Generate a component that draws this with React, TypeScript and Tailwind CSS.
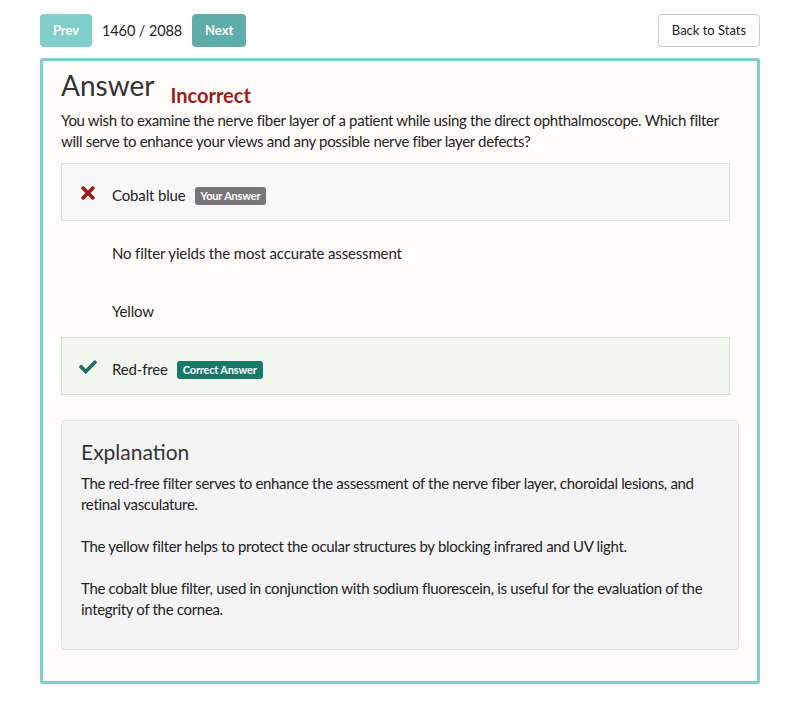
import { FaTimes, FaCheck } from 'react-icons/fa';

type Option = {
  text: string;
  state: 'wrong' | 'right' | 'none';
};

const options: Option[] = [
  { text: 'Cobalt blue', state: 'wrong' },
  { text: 'No filter yields the most accurate assessment', state: 'none' },
  { text: 'Yellow', state: 'none' },
  { text: 'Red-free', state: 'right' },
];

function OptionRow({ opt }: { opt: Option }) {
  const box =
    opt.state === 'wrong'
      ? 'border border-[#dddddd] bg-[#f9f9f9]'
      : opt.state === 'right'
        ? 'border border-[#cfe5c9] bg-[#f2f8f0]'
        : 'border border-transparent';
  return (
    <div className={`h-[58px] flex items-start pt-[21px] pl-[16px] ${box}`}>
      <div className="w-[34px] h-[21px] flex items-center">
        {opt.state === 'wrong' && <FaTimes className="text-[#9b1c1c] w-[20px] h-[20px] -mt-[6px]" />}
        {opt.state === 'right' && <FaCheck className="text-[#1d6f63] w-[20px] h-[18px] -mt-[6px]" />}
      </div>
      <span className="text-[15px] leading-[21px] tracking-[-0.15px] text-[#222]">{opt.text}</span>
      {opt.state === 'wrong' && (
        <span className="ml-[9px] mt-[2px] rounded-[3px] bg-[#777777] px-[6px] h-[18px] flex items-center text-[11px] font-bold tracking-[-0.2px] text-white">
          Your Answer
        </span>
      )}
      {opt.state === 'right' && (
        <span className="ml-[9px] mt-[2px] rounded-[3px] bg-[#177a68] px-[6px] h-[18px] flex items-center text-[11px] font-bold tracking-[-0.2px] text-white">
          Correct Answer
        </span>
      )}
    </div>
  );
}

export default function App() {
  return (
    <div className="min-h-screen bg-white font-['Lato',sans-serif] text-[#222]">
      <div className="px-[40px] pt-[14px]">
        {/* top bar */}
        <div className="flex items-center justify-between">
          <div className="flex items-center">
            <button className="h-[33px] w-[52px] rounded-[4px] bg-[#80cfcb] text-[13px] font-bold text-white">
              Prev
            </button>
            <span className="ml-[10px] mr-[10px] text-[14.5px] tracking-[-0.1px]">1460 / 2088</span>
            <button className="h-[33px] w-[54px] rounded-[4px] bg-[#5fadaa] text-[13px] font-bold text-white">
              Next
            </button>
          </div>
          <button className="h-[33px] w-[102px] rounded-[4px] border border-[#cccccc] bg-white text-[13px] text-[#222]">
            Back to Stats
          </button>
        </div>

        {/* card */}
        <div className="mt-[11px] rounded-[3px] border-[3px] border-[#7fcfcb] bg-[#fffdfb] px-[18px] pt-[6px] pb-[31px] shadow-[0_1px_2px_rgba(0,0,0,0.06)]">
          <h2 className="text-[28px] leading-[36px] text-[#333]">
            Answer
            <span className="ml-[16px] align-[-7px] text-[20px] leading-[24px] font-bold text-[#9b1c1c]">Incorrect</span>
          </h2>
          <p className="mt-[3px] text-[15px] leading-[21px] tracking-[-0.32px] text-[#222]">
            You wish to examine the nerve fiber layer of a patient while using the direct ophthalmoscope. Which filter
            will serve to enhance your views and any possible nerve fiber layer defects?
          </p>

          <div className="mt-[11px] mr-[9px] flex flex-col">
            {options.map((o, i) => (
              <OptionRow key={i} opt={o} />
            ))}
          </div>

          <div className="mt-[25px] rounded-[4px] border border-[#e2e2e2] bg-[#f4f4f4] px-[19px] pt-[17px] pb-[29px] text-[15px] leading-[21px] tracking-[-0.32px] text-[#222]">
            <h3 className="text-[21px] leading-[28px] tracking-normal text-[#333] mb-[7px]">Explanation</h3>
            <p>
              The red-free filter serves to enhance the assessment of the nerve fiber layer, choroidal lesions, and
              retinal vasculature.
            </p>
            <p className="mt-[21px]">
              The yellow filter helps to protect the ocular structures by blocking infrared and UV light.
            </p>
            <p className="mt-[21px]">
              The cobalt blue filter, used in conjunction with sodium fluorescein, is useful for the evaluation of the
              integrity of the cornea.
            </p>
          </div>
        </div>
      </div>
    </div>
  );
}
